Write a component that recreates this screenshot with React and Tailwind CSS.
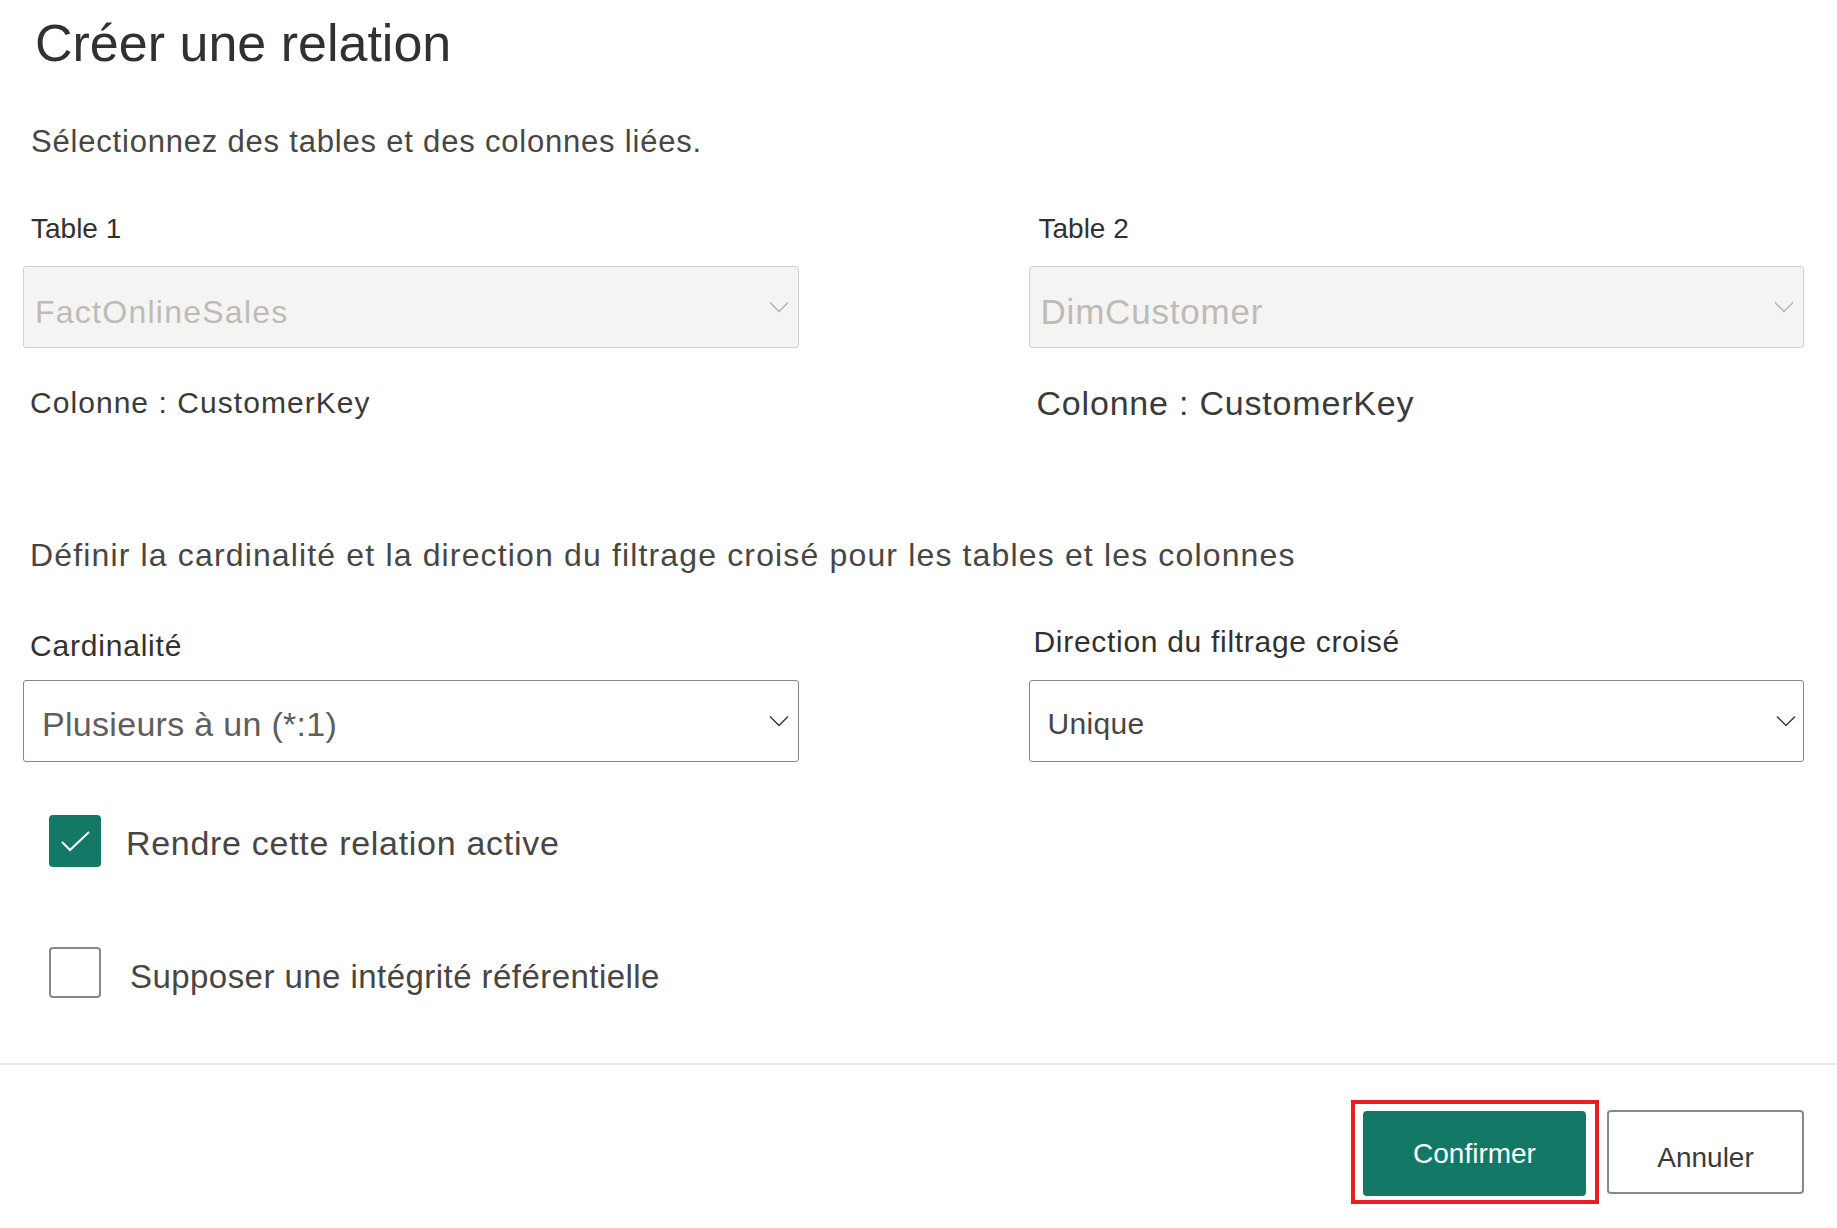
import React, { useState } from 'react';

function Chevron({ color = '#b3b0ad', width = 1.3 }) {
  return (
    <svg width="20" height="12" viewBox="0 0 20 12" fill="none">
      <path d="M1 1.5 L10 10.5 L19 1.5" stroke={color} strokeWidth={width} />
    </svg>
  );
}

function DisabledSelect({ value, big }) {
  return (
    <div className="flex h-[82px] items-center justify-between rounded-[3px] border border-[#d2d0ce] bg-[#f5f4f3] pl-[11px] pr-[9px]">
      <span
        className={
          big
            ? 'pt-[10px] text-[35px] leading-[40px] tracking-[0.8px] text-[#bdbbb8]'
            : 'pt-[10px] text-[32px] leading-[40px] tracking-[1.25px] text-[#bdbbb8]'
        }
      >
        {value}
      </span>
      <Chevron />
    </div>
  );
}

function Checkbox({ checked, onChange }) {
  if (checked) {
    return (
      <button
        type="button"
        onClick={onChange}
        className="flex h-[52px] w-[52px] shrink-0 items-center justify-center rounded-[4px] bg-[#137866]"
      >
        <svg width="52" height="52" viewBox="0 0 52 52" fill="none">
          <path d="M13 27 L21 35 L40 17" stroke="white" strokeWidth="2" />
        </svg>
      </button>
    );
  }
  return (
    <button
      type="button"
      onClick={onChange}
      className="h-[51px] w-[52px] shrink-0 rounded-[4px] border-2 border-[#8a8886] bg-white"
    />
  );
}

export default function App() {
  const [active, setActive] = useState(true);
  const [integrity, setIntegrity] = useState(false);

  return (
    <div className="min-h-[1228px] w-full bg-white font-['Liberation_Sans',Arial,sans-serif]">
      <div className="pl-[23px] pr-[33px]">
        <h1 className="pl-[12px] pt-[13px] text-[52px] leading-[60px] font-normal text-[#323130]">
          Créer une relation
        </h1>

        <p className="mt-[49px] pl-[8px] text-[31px] leading-[40px] tracking-[0.8px] text-[#484644]">
          Sélectionnez des tables et des colonnes liées.
        </p>

        <div className="mt-[49px] grid grid-cols-2 gap-x-[230px]">
          <div>
            <div className="pl-[8px] text-[28px] leading-[36px] text-[#323130]">Table 1</div>
            <div className="mt-[19px]">
              <DisabledSelect value="FactOnlineSales" />
            </div>
            <div className="mt-[37px] pl-[7px] text-[30px] leading-[36px] tracking-[1.05px] text-[#3b3a39]">
              Colonne : CustomerKey
            </div>
          </div>
          <div>
            <div className="pl-[10px] text-[28px] leading-[36px] text-[#323130]">Table 2</div>
            <div className="mt-[19px]">
              <DisabledSelect value="DimCustomer" big />
            </div>
            <div className="mt-[37px] pl-[8px] text-[34px] leading-[36px] tracking-[0.8px] text-[#3b3a39]">
              Colonne : CustomerKey
            </div>
          </div>
        </div>

        <p className="mt-[114px] pl-[7px] text-[32px] leading-[40px] tracking-[1.15px] text-[#484644]">
          Définir la cardinalité et la direction du filtrage croisé pour les tables et les colonnes
        </p>

        <div className="grid grid-cols-2 gap-x-[230px]">
          <div>
            <div className="mb-[16px] mt-[53px] pl-[7px] text-[30px] leading-[36px] tracking-[0.8px] text-[#323130]">
              Cardinalité
            </div>
            <div className="flex h-[82px] items-center justify-between rounded-[3px] border border-[#8a8886] bg-white pl-[18px] pr-[9px]">
              <span className="pt-[6px] text-[34px] leading-[40px] tracking-[0.3px] text-[#605e5c]">Plusieurs à un (*:1)</span>
              <Chevron color="#3b3a39" width={1.5} />
            </div>
          </div>
          <div>
            <div className="mb-[20px] mt-[49px] pl-[5px] text-[30px] leading-[36px] tracking-[0.7px] text-[#323130]">
              Direction du filtrage croisé
            </div>
            <div className="flex h-[82px] items-center justify-between rounded-[3px] border border-[#8a8886] bg-white pl-[18px] pr-[7px]">
              <span className="pt-[5px] text-[30px] leading-[40px] tracking-[0.3px] text-[#484644]">Unique</span>
              <Chevron color="#3b3a39" width={1.5} />
            </div>
          </div>
        </div>

        <div className="mt-[53px] flex items-center gap-[25px] pl-[26px]">
          <Checkbox checked={active} onChange={() => setActive(!active)} />
          <span className="pt-[4px] text-[34px] leading-[40px] tracking-[0.7px] text-[#484644]">
            Rendre cette relation active
          </span>
        </div>

        <div className="mt-[80px] flex items-center gap-[29px] pl-[26px]">
          <Checkbox checked={integrity} onChange={() => setIntegrity(!integrity)} />
          <span className="pt-[8px] text-[33px] leading-[40px] tracking-[0.45px] text-[#484644]">
            Supposer une intégrité référentielle
          </span>
        </div>
      </div>

      <div className="mt-[65px] h-[2px] w-full bg-[#ebebeb]" />

      <div className="mt-[35px] flex items-center justify-end gap-[8px] pr-[33px]">
        <div className="border-4 border-[#ec1c24] pb-[4px] pl-[8px] pr-[9px] pt-[7px]">
          <button
            type="button"
            className="h-[85px] w-[223px] rounded-[4px] bg-[#137866] text-[28px] text-white"
          >
            Confirmer
          </button>
        </div>
        <button
          type="button"
          className="h-[84px] w-[197px] rounded-[4px] border-2 border-[#8a8886] bg-white pt-[12px] text-[28px] text-[#3b3a39]"
        >
          Annuler
        </button>
      </div>
    </div>
  );
}
